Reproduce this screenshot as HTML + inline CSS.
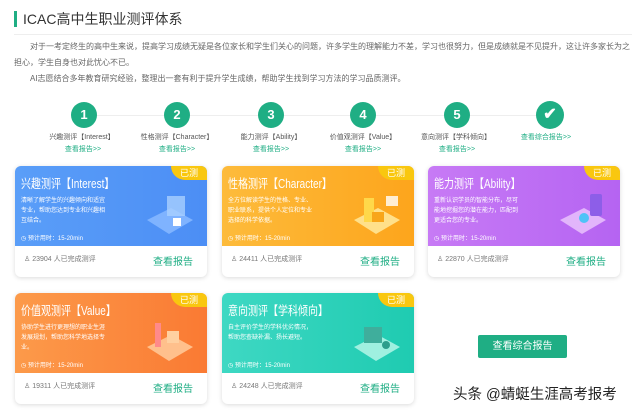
<!DOCTYPE html>
<html><head><meta charset="utf-8"><style>
*{margin:0;padding:0;box-sizing:border-box}
body{width:640px;height:413px;background:#fff;font-family:"Liberation Sans","Noto Sans CJK SC",sans-serif;position:relative;overflow:hidden;color:#555}
.a{position:absolute}
.title{left:14px;top:11px;font-size:14px;color:#333;border-left:3px solid #1fae84;padding-left:6px;line-height:16px;white-space:nowrap}
.hr{left:14px;top:34px;width:618px;height:1px;background:#eee}
.p{font-size:8px;color:#666;white-space:nowrap;line-height:10px}
.line{left:84px;top:115px;width:466px;height:1px;background:#eee}
.c{width:26px;height:26px;border-radius:50%;background:#1fae84;color:#fff;font-size:13px;font-weight:bold;text-align:center;line-height:26px;top:102px}
.lb{font-size:7px;color:#555;width:100px;text-align:center;top:132px;white-space:nowrap}
.lk{font-size:7px;color:#1fae84;width:100px;text-align:center;top:144px;white-space:nowrap}
.card{width:192px;height:111px;border-radius:6px;box-shadow:0 1px 5px rgba(0,0,0,.15);overflow:hidden;background:#fff}
.top{position:absolute;left:0;top:0;width:100%;height:80px}
.tag{position:absolute;right:0;top:0;width:36px;height:14px;background:#f9c70f;border-bottom-left-radius:14px;color:#fff;font-size:9px;text-align:center;line-height:14px}
.ct{position:absolute;left:6px;top:7px;font-size:12.5px;color:#fff;white-space:nowrap;transform:scaleX(.8);transform-origin:left}
.cd{position:absolute;left:6px;top:30px;width:88px;font-size:6px;line-height:10px;color:#fff}
.tm{position:absolute;left:6px;top:67px;font-size:6px;color:#fff}
.ill{position:absolute;right:12px;top:24px;width:52px;height:48px}
.cnt{position:absolute;left:9px;top:88px;font-size:7px;color:#777}
.vr{position:absolute;right:14px;top:87px;font-size:10px;color:#1fae84}
.btn{left:478px;top:335px;width:89px;height:23px;background:#1fae84;border-radius:2px;color:#fff;font-size:10px;text-align:center;line-height:23px}
.wm{left:453px;top:383px;font-size:14.5px;color:#222;white-space:nowrap}
</style></head><body>
<div class="a title">ICAC高中生职业测评体系</div>
<div class="a hr"></div>
<div class="a p" style="left:30px;top:42px">对于一考定终生的高中生来说，提高学习成绩无疑是各位家长和学生们关心的问题，许多学生的理解能力不差，学习也很努力，但是成绩就是不见提升，这让许多家长为之</div>
<div class="a p" style="left:14px;top:58px">担心，学生自身也对此忧心不已。</div>
<div class="a p" style="left:30px;top:74px">AI志愿结合多年教育研究经验，整理出一套有利于提升学生成绩，帮助学生找到学习方法的学习品质测评。</div>
<div class="a line"></div>
<div class="a c" style="left:71px">1</div>
<div class="a c" style="left:164px">2</div>
<div class="a c" style="left:258px">3</div>
<div class="a c" style="left:350px">4</div>
<div class="a c" style="left:444px">5</div>
<div class="a c" style="left:536px;width:28px;height:28px;top:101px;font-size:16px;line-height:28px">✔</div>
<div class="a lb" style="left:32px">兴趣测评【Interest】</div>
<div class="a lb" style="left:127px">性格测评【Character】</div>
<div class="a lb" style="left:221px">能力测评【Ability】</div>
<div class="a lb" style="left:313px">价值观测评【Value】</div>
<div class="a lb" style="left:406px">意向测评【学科倾向】</div>
<div class="a lk" style="left:33px">查看报告&gt;&gt;</div>
<div class="a lk" style="left:127px">查看报告&gt;&gt;</div>
<div class="a lk" style="left:221px">查看报告&gt;&gt;</div>
<div class="a lk" style="left:313px">查看报告&gt;&gt;</div>
<div class="a lk" style="left:407px">查看报告&gt;&gt;</div>
<div class="a lk" style="left:496px;top:132px">查看综合报告&gt;&gt;</div>

<div class="a card" style="left:15px;top:166px"><div class="top" style="background:linear-gradient(90deg,#5a9ef8,#4c8ef5)"></div><div class="tag">已测</div><div class="ct">兴趣测评【Interest】</div><div class="cd">清晰了解学生的兴趣倾向和适宜专业，帮助您达到专业和兴趣相互结合。</div><div class="tm">◷ 预计用时：15-20min</div><svg class="ill" viewBox="0 0 52 48"><polygon points="4,30 28,18 50,30 26,44" fill="#7fb3ff"/><rect x="24" y="6" width="18" height="20" fill="#a9d0ff" opacity=".8"/><rect x="30" y="28" width="8" height="8" fill="#fff"/></svg><div class="cnt">♙ 23904 人已完成测评</div><div class="vr">查看报告</div></div>

<div class="a card" style="left:222px;top:166px"><div class="top" style="background:linear-gradient(90deg,#fdbb3b,#fda51c)"></div><div class="tag">已测</div><div class="ct">性格测评【Character】</div><div class="cd">全方位解读学生的性格、专业、职业联系，提供个人定位和专业选择的科学依据。</div><div class="tm">◷ 预计用时：15-20min</div><svg class="ill" viewBox="0 0 52 48"><polygon points="4,30 28,18 50,30 26,44" fill="#ffe08a"/><rect x="14" y="8" width="10" height="24" fill="#ffd84a"/><rect x="36" y="6" width="12" height="10" fill="#fff" opacity=".8"/><rect x="22" y="22" width="12" height="10" fill="#f8a61a"/></svg><div class="cnt">♙ 24411 人已完成测评</div><div class="vr">查看报告</div></div>

<div class="a card" style="left:428px;top:166px"><div class="top" style="background:linear-gradient(90deg,#c77af5,#b564f2)"></div><div class="tag">已测</div><div class="ct">能力测评【Ability】</div><div class="cd">重新认识学员的智能分布，尽可能地挖掘您的潜在能力，匹配到更适合您的专业。</div><div class="tm">◷ 预计用时：15-20min</div><svg class="ill" viewBox="0 0 52 48"><polygon points="4,30 28,18 50,30 26,44" fill="#e2b5fb"/><rect x="34" y="4" width="12" height="22" rx="2" fill="#8d5ee8"/><circle cx="28" cy="28" r="5" fill="#4fc3f7"/></svg><div class="cnt">♙ 22870 人已完成测评</div><div class="vr">查看报告</div></div>

<div class="a card" style="left:15px;top:293px"><div class="top" style="background:linear-gradient(90deg,#fc9a4a,#fa7a33)"></div><div class="tag">已测</div><div class="ct">价值观测评【Value】</div><div class="cd">协助学生进行更理想的职业生涯发展规划，帮助您科学地选择专业。</div><div class="tm">◷ 预计用时：15-20min</div><svg class="ill" viewBox="0 0 52 48"><polygon points="4,30 28,18 50,30 26,44" fill="#ffc08c"/><rect x="12" y="6" width="6" height="24" fill="#ff8a8a"/><rect x="24" y="14" width="12" height="12" fill="#ffd0a0"/></svg><div class="cnt">♙ 19311 人已完成测评</div><div class="vr">查看报告</div></div>

<div class="a card" style="left:222px;top:293px"><div class="top" style="background:linear-gradient(90deg,#3ed8c3,#1fcbb1)"></div><div class="tag">已测</div><div class="ct">意向测评【学科倾向】</div><div class="cd">自主评价学生的学科优劣情况，帮助您查缺补漏、扬长避短。</div><div class="tm">◷ 预计用时：15-20min</div><svg class="ill" viewBox="0 0 52 48"><polygon points="4,30 28,18 50,30 26,44" fill="#9ff0e0"/><rect x="14" y="10" width="18" height="16" fill="#3fae9c"/><circle cx="36" cy="28" r="4" fill="#2c9e8c"/></svg><div class="cnt">♙ 24248 人已完成测评</div><div class="vr">查看报告</div></div>

<div class="a btn">查看综合报告</div>
<div class="a wm">头条 @蜻蜓生涯高考报考</div>
</body></html>
